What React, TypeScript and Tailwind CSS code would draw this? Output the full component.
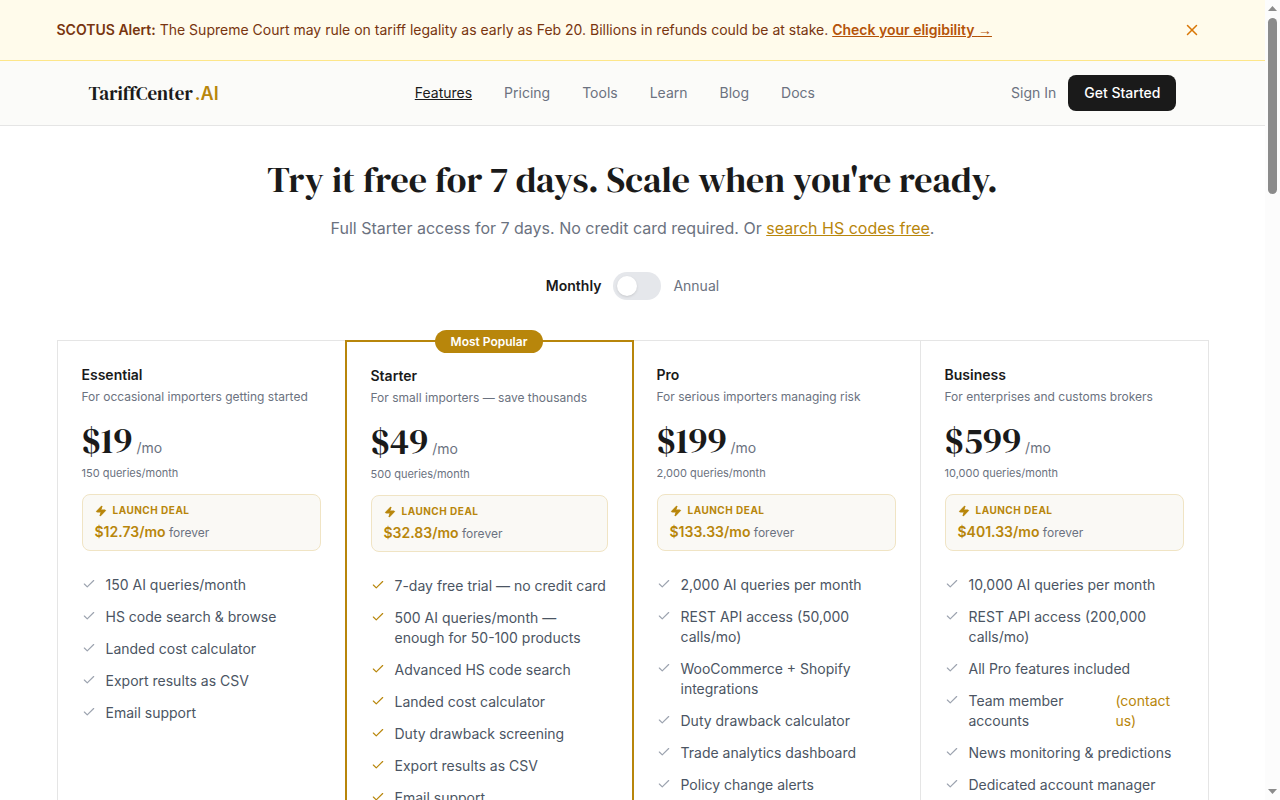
import React from "react";
import { Check, X, Zap } from "lucide-react";

type Feature = { text: string; link?: string };
type Plan = {
  name: string;
  blurb: string;
  price: string;
  queries: string;
  deal: string;
  popular?: boolean;
  frame: string;
  features: Feature[];
};

const serif = "font-['DM_Serif_Display','Liberation_Serif',serif]";

const navLinks = ["Features", "Pricing", "Tools", "Learn", "Blog", "Docs"];

const plans: Plan[] = [
  {
    name: "Essential",
    blurb: "For occasional importers getting started",
    price: "$19",
    queries: "150 queries/month",
    deal: "$12.73/mo",
    frame: "border-t border-b border-l border-[#e5e5e5]",
    features: [
      { text: "150 AI queries/month" },
      { text: "HS code search & browse" },
      { text: "Landed cost calculator" },
      { text: "Export results as CSV" },
      { text: "Email support" },
    ],
  },
  {
    name: "Starter",
    blurb: "For small importers — save thousands",
    price: "$49",
    queries: "500 queries/month",
    deal: "$32.83/mo",
    popular: true,
    frame: "z-10 -mr-px border-2 border-[#b8860b]",
    features: [
      { text: "7-day free trial — no credit card" },
      { text: "500 AI queries/month — enough for 50-100 products" },
      { text: "Advanced HS code search" },
      { text: "Landed cost calculator" },
      { text: "Duty drawback screening" },
      { text: "Export results as CSV" },
      { text: "Email support" },
    ],
  },
  {
    name: "Pro",
    blurb: "For serious importers managing risk",
    price: "$199",
    queries: "2,000 queries/month",
    deal: "$133.33/mo",
    frame: "border-t border-r border-b border-[#e5e5e5]",
    features: [
      { text: "2,000 AI queries per month" },
      { text: "REST API access (50,000 calls/mo)" },
      { text: "WooCommerce + Shopify integrations" },
      { text: "Duty drawback calculator" },
      { text: "Trade analytics dashboard" },
      { text: "Policy change alerts" },
    ],
  },
  {
    name: "Business",
    blurb: "For enterprises and customs brokers",
    price: "$599",
    queries: "10,000 queries/month",
    deal: "$401.33/mo",
    frame: "border-t border-r border-b border-[#e5e5e5]",
    features: [
      { text: "10,000 AI queries per month" },
      { text: "REST API access (200,000 calls/mo)" },
      { text: "All Pro features included" },
      { text: "Team member accounts", link: "(contact us)" },
      { text: "News monitoring & predictions" },
      { text: "Dedicated account manager" },
    ],
  },
];

function AlertBar() {
  return (
    <div className="border-b border-[#fde68a] bg-[#fffbeb]">
      <div className="mx-auto flex h-15 max-w-6xl items-center justify-between pr-2">
        <p className="text-sm text-[#78350f]">
          <strong className="font-semibold">SCOTUS Alert:</strong> The Supreme Court may rule on tariff legality as
          early as Feb 20. Billions in refunds could be at stake.{" "}
          <a href="#eligibility" className="font-semibold text-[#b45309] underline">
            Check your eligibility <span className="font-['Liberation_Sans',sans-serif]">→</span>
          </a>
        </p>
        <button type="button" aria-label="Dismiss alert" className="text-[#d97706]">
          <X className="size-4.5" />
        </button>
      </div>
    </div>
  );
}

function Header() {
  return (
    <header className="border-b border-[#e5e5e5] bg-[#fbfbf9]">
      <div className="mx-auto flex h-16 max-w-6xl items-center justify-between px-8">
        <a href="#home" className="flex items-baseline gap-0.5 text-lg text-[#1a1a1a]">
          <span className={`${serif} text-[19px] leading-[30px]`}>TariffCenter</span>
          <span className="font-semibold text-[#b8860b]">.AI</span>
        </a>
        <nav className="flex gap-8 text-sm text-[#6b7280]">
          {navLinks.map((label, i) => (
            <a key={label} href={`#${label.toLowerCase()}`} className={i === 0 ? "text-[#1a1a1a] underline" : ""}>
              {label}
            </a>
          ))}
        </nav>
        <div className="flex items-center gap-3 text-sm">
          <a href="#sign-in" className="text-[#6b7280]">
            Sign In
          </a>
          <a href="#start" className="rounded-lg bg-[#1a1a1a] px-4 py-2 font-medium text-white">
            Get Started
          </a>
        </div>
      </div>
    </header>
  );
}

function PlanCard({ plan }: { plan: Plan }) {
  return (
    <section className={`relative p-6 ${plan.frame}`}>
      {plan.popular && (
        <div className="absolute inset-x-0 -top-3 flex justify-center">
          <span className="rounded-full bg-[#b8860b] px-4 py-1 text-xs leading-[15px] font-semibold text-white">
            Most Popular
          </span>
        </div>
      )}
      <h2 className="text-sm font-semibold text-[#1a1a1a]">{plan.name}</h2>
      <p className="mt-1 text-xs text-[#6b7280]">{plan.blurb}</p>
      <p className="mt-4 flex items-baseline gap-1">
        <span className={`${serif} text-4xl text-[#1a1a1a]`}>{plan.price}</span>
        <span className="text-sm text-[#6b7280]">/mo</span>
      </p>
      <p className="mt-1 text-[11px] leading-[17px] text-[#6b7280]">{plan.queries}</p>
      <div className="mt-3 rounded-lg border border-[#f0e4c4] bg-[#faf9f5] px-3 py-2">
        <p className="flex items-center gap-1.5 text-[10px] leading-[15px] font-bold tracking-wider text-[#b8860b]">
          <Zap className="size-3 fill-current" />
          LAUNCH DEAL
        </p>
        <p className="mt-1 text-xs text-[#6b7280]">
          <span className="text-sm font-semibold text-[#b8860b]">{plan.deal}</span> forever
        </p>
      </div>
      <ul className="mt-6 flex flex-col gap-3 text-sm text-[#4b5563]">
        {plan.features.map((f) => (
          <li key={f.text} className="flex items-start gap-2.5">
            <Check className={`mt-0.5 size-3.5 shrink-0 ${plan.popular ? "text-[#b8860b]" : "text-[#9ca3af]"}`} />
            <span>{f.text}</span>
            {f.link && (
              <a href="#contact" className="text-[#b8860b]">
                {f.link}
              </a>
            )}
          </li>
        ))}
      </ul>
    </section>
  );
}

function ScrollRail() {
  return (
    <div aria-hidden="true" className="flex w-[15px] shrink-0 flex-col items-center bg-[#fcfcfc] py-1.5 text-[#8b8b8b]">
      <svg viewBox="0 0 9 5" className="h-[5px] w-[9px] shrink-0 fill-current">
        <path d="M0 5 4.500 0 9 5Z" />
      </svg>
      <div className="my-[7px] w-[9px] flex-1">
        <div className="h-[23%] rounded-full bg-current" />
      </div>
      <svg viewBox="0 0 9 5" className="h-[5px] w-[9px] shrink-0 fill-current">
        <path d="M0 0 4.500 5 9 0Z" />
      </svg>
    </div>
  );
}

export default function App() {
  return (
    <div className="flex h-screen bg-white font-['Inter',sans-serif]">
      <div className="min-w-0 flex-1 overflow-y-auto bg-white [scrollbar-width:none]">
        <AlertBar />
        <Header />
        <main className="mx-auto max-w-6xl pt-8 pb-16">
          <h1 className={`${serif} text-center text-4xl leading-[44px] text-[#1a1a1a]`}>
            Try it free for 7 days. Scale when you're ready.
          </h1>
          <p className="mt-[14px] text-center text-base text-[#6b7280]">
            Full Starter access for 7 days. No credit card required. Or{" "}
            <a href="#search" className="text-[#b8860b] underline">
              search HS codes free
            </a>
            .
          </p>
          <div className="mt-8 flex items-center justify-center gap-3 text-sm">
            <span className="font-semibold text-[#1a1a1a]">Monthly</span>
            <button
              type="button"
              role="switch"
              aria-checked="false"
              aria-label="Annual billing"
              className="flex h-7 w-12 items-center rounded-full bg-[#e5e7eb] px-1"
            >
              <span className="size-5 rounded-full bg-white shadow-sm" />
            </button>
            <span className="text-[#6b7280]">Annual</span>
          </div>
          <div className="mt-10 grid grid-cols-4">
            {plans.map((plan) => (
              <PlanCard key={plan.name} plan={plan} />
            ))}
          </div>
        </main>
      </div>
      <ScrollRail />
    </div>
  );
}
